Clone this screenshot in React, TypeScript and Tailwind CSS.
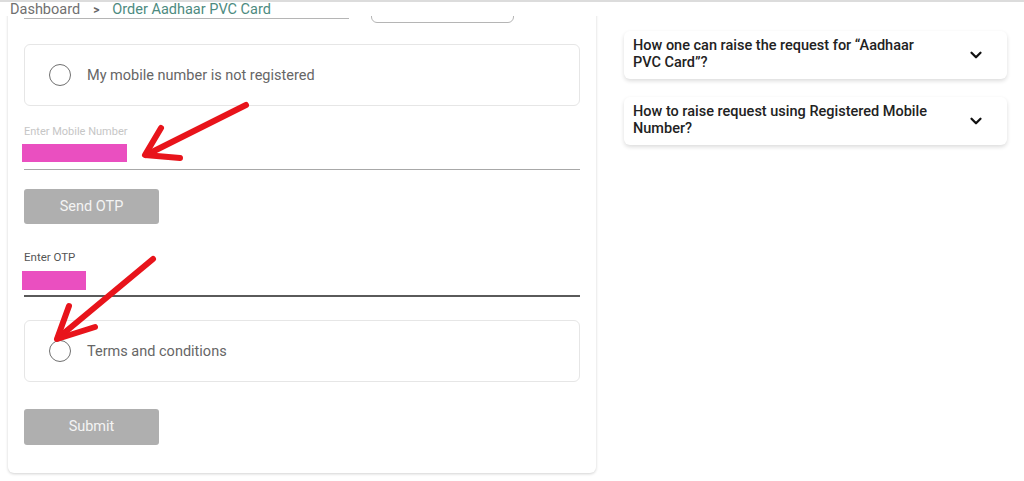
import { ChevronDown } from 'lucide-react';

const faqs = [
  'How one can raise the request for “Aadhaar PVC Card”?',
  'How to raise request using Registered Mobile Number?',
];

function OptionBox({ label }: { label: string }) {
  return (
    <div className="flex h-[62px] items-center gap-4 rounded-md border border-[#e6e6e6] pl-6">
      <span className="h-[22px] w-[22px] rounded-full border-[1.5px] border-[#707070]" />
      <span className="mt-[2px] text-[14.5px] text-[#666]">{label}</span>
    </div>
  );
}

export default function App() {
  return (
    <div
      className="relative h-[481px] w-[1024px] overflow-hidden bg-white"
      style={{ fontFamily: 'Roboto, "Liberation Sans", sans-serif' }}
    >
      {/* Breadcrumb bar */}
      <div className="absolute left-0 right-0 top-0 z-10 h-[16px] border-t-2 border-[#dcdcdc] bg-white">
        <div className="relative top-[-1px] flex items-center gap-[13px] pl-[10px] text-[14.5px] leading-[18px]">
          <span className="text-[#707070]">Dashboard</span>
          <span className="text-[12px] font-bold text-[#666]">&gt;</span>
          <span className="text-[#4d8b7f]">Order Aadhaar PVC Card</span>
        </div>
      </div>

      <div className="flex">
        {/* Form card */}
        <div className="ml-2 mt-[-40px] h-[513px] w-[588px] rounded-md bg-white px-4 shadow-[0_1px_3px_rgba(0,0,0,0.18)]">
          <div className="flex items-start">
            <div className="h-[59px] w-[325px] border-b border-[#b5b5b5]" />
            <div className="ml-[22px] h-[63px] w-[143px] rounded-md border border-[#b5b5b5]" />
          </div>

          <div className="mt-[21px]">
            <OptionBox label="My mobile number is not registered" />
          </div>

          <div className="mt-[19px] text-[11px] leading-[13px] text-[#c6c6c6]">Enter Mobile Number</div>
          <div className="ml-[-2px] mt-[6px] h-[18px] w-[105px] bg-[#ea4fc0]" />
          <div className="mt-[7px] border-b border-[#a8a8a8]" />

          <button className="mt-[19px] h-[35px] w-[135px] rounded-[3px] bg-[#afafaf] text-[14.5px] text-[#f4f4f4]">
            Send OTP
          </button>

          <div className="mt-[27px] text-[11.5px] leading-[13px] text-[#555]">Enter OTP</div>
          <div className="ml-[-2px] mt-[7px] h-[19px] w-[64px] bg-[#ea4fc0]" />
          <div className="mt-[5px] border-b-2 border-[#5a5a5a]" />

          <div className="mt-[23px]">
            <OptionBox label="Terms and conditions" />
          </div>

          <button className="mt-[27px] h-[36px] w-[135px] rounded-[3px] bg-[#afafaf] text-[14.5px] text-[#f4f4f4]">
            Submit
          </button>
        </div>

        {/* FAQ column */}
        <div className="ml-[28px] mt-[31px] flex w-[383px] flex-col gap-[18px]">
          {faqs.map((q) => (
            <div
              key={q}
              className="flex h-[48px] items-center justify-between rounded-md bg-white pl-[9px] pr-[22px] shadow-[0_2px_4px_rgba(0,0,0,0.14)]"
            >
              <span className="mt-[-2px] w-[300px] text-[14.5px] font-medium leading-[17px] text-[#222]">{q}</span>
              <ChevronDown className="h-[18px] w-[18px] text-[#111]" strokeWidth={3} />
            </div>
          ))}
        </div>
      </div>

      {/* Red annotation arrows */}
      <svg className="pointer-events-none absolute inset-0 z-20" width="1024" height="481">
        <g stroke="#e8141b" strokeWidth="6" strokeLinecap="round" strokeLinejoin="round" fill="none">
          <path d="M246 105 L146 155" />
          <path d="M161 128 L145 155 L180 158" />
          <path d="M153 259 L58 338" />
          <path d="M69 306 L57 339 L95 327" />
        </g>
      </svg>
    </div>
  );
}
